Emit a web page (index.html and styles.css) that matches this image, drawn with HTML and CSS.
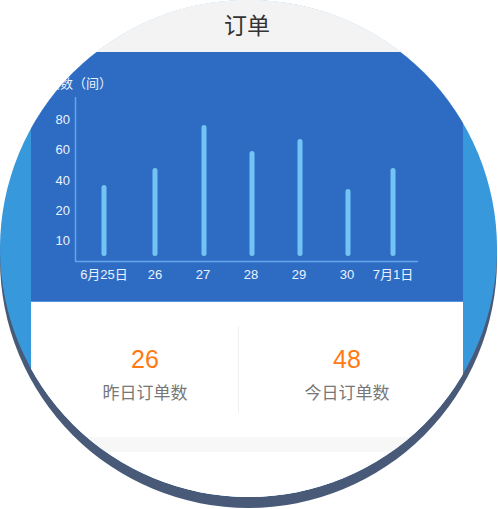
FILE: index.html
```html
<!DOCTYPE html>
<html lang="zh-CN">
<head>
<meta charset="utf-8">
<title>订单</title>
<link rel="stylesheet" href="styles.css">
</head>
<body>
<div class="lens">
  <div class="screen">
    <header class="topbar"><h1 class="title">订单</h1></header>
    <section class="chart">
      <svg class="chart-svg" width="432" height="249" viewBox="0 0 432 249">
        <text class="axis-title" x="81" y="36" text-anchor="end">房间数（间）</text>
        <g class="ylabels" text-anchor="end">
          <text x="39" y="71.7">80</text>
          <text x="39" y="101.7">60</text>
          <text x="39" y="132.7">40</text>
          <text x="39" y="162.7">20</text>
          <text x="39" y="192.7">10</text>
        </g>
        <line class="axis" x1="44.5" y1="45" x2="44.5" y2="209.5"/>
        <line class="axis" x1="44" y1="209.5" x2="387" y2="209.5"/>
        <g class="bars">
          <rect x="70.5" y="133" width="5" height="71" rx="2.5"/>
          <rect x="121.5" y="116" width="5" height="88" rx="2.5"/>
          <rect x="170.5" y="73" width="5" height="131" rx="2.5"/>
          <rect x="218.5" y="99" width="5" height="105" rx="2.5"/>
          <rect x="266.5" y="87" width="5" height="117" rx="2.5"/>
          <rect x="314.5" y="137" width="5" height="67" rx="2.5"/>
          <rect x="359.5" y="116" width="5" height="88" rx="2.5"/>
        </g>
        <g class="xlabels" text-anchor="middle">
          <text x="73" y="226.5">6月25日</text>
          <text x="124" y="226.5">26</text>
          <text x="172" y="226.5">27</text>
          <text x="220" y="226.5">28</text>
          <text x="268" y="226.5">29</text>
          <text x="316" y="226.5">30</text>
          <text x="362" y="226.5">7月1日</text>
        </g>
      </svg>
    </section>
    <section class="stats">
      <div class="stat stat-left">
        <div class="stat-num">26</div>
        <div class="stat-label">昨日订单数</div>
      </div>
      <div class="divider"></div>
      <div class="stat stat-right">
        <div class="stat-num">48</div>
        <div class="stat-label">今日订单数</div>
      </div>
    </section>
    <div class="strip"></div>
    <div class="rest"></div>
  </div>
</div>
</body>
</html>
```
FILE: styles.css
```css
html, body {
  margin: 0;
  padding: 0;
  background: #ffffff;
}

body {
  width: 498px;
  height: 509px;
  overflow: hidden;
  font-family: "Liberation Sans", "Noto Sans CJK SC", sans-serif;
}

.lens {
  width: 497px;
  height: 497px;
  border-radius: 50%;
  overflow: hidden;
  background: #3898dc;
  box-shadow: 0 11px 0 0 #485a78;
}

.screen {
  margin-left: 31px;
  width: 432px;
  height: 497px;
  display: flex;
  flex-direction: column;
  background: #ffffff;
}

.topbar {
  height: 52px;
  background: #f3f3f3;
  display: flex;
  justify-content: center;
}

.title {
  margin: 0;
  font-size: 23px;
  font-weight: normal;
  line-height: 48px;
  color: #333333;
  font-family: "Noto Sans CJK SC", sans-serif;
}

.chart {
  height: 249px;
  background: #2e6cc3;
  border-bottom: 1px solid #5492dc;
}

.chart-svg {
  display: block;
}

.chart-svg text {
  fill: #eaf2ff;
  font-size: 13px;
  font-family: "Liberation Sans", "Noto Sans CJK SC", sans-serif;
}

.axis {
  stroke: #5fa6ee;
  stroke-width: 1.5;
}

.bars rect {
  fill: #74c3f5;
}

.stats {
  height: 135px;
  box-sizing: border-box;
  padding: 24px 0 24px 21px;
  display: grid;
  grid-template-columns: 186px 1px 216px;
  background: #ffffff;
}

.divider {
  background: #efefef;
}

.stat {
  padding-top: 18px;
  display: flex;
  flex-direction: column;
  align-items: center;
}

.stat-num {
  font-size: 25px;
  line-height: 30px;
  color: #ff7a14;
}

.stat-label {
  margin-top: 6px;
  font-size: 17px;
  line-height: 24px;
  color: #777777;
  font-family: "Noto Sans CJK SC", sans-serif;
}

.strip {
  height: 15px;
  background: #f7f7f7;
}

.rest {
  flex: 1;
  background: #ffffff;
}
```
